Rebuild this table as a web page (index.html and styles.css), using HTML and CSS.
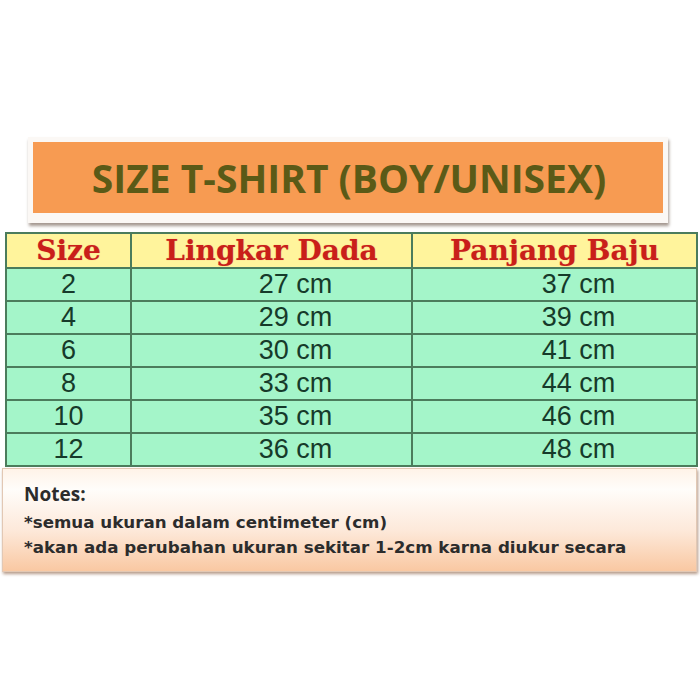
FILE: index.html
```html
<!DOCTYPE html>
<html>
<head>
<meta charset="utf-8">
<link rel="stylesheet" href="styles.css">
</head>
<body>
<div class="page">
  <div class="title-frame">
    <div class="title-box">SIZE T-SHIRT (BOY/UNISEX)</div>
  </div>
  <table class="sizes">
    <thead>
      <tr><th class="c1">Size</th><th class="c2">Lingkar Dada</th><th class="c3">Panjang Baju</th></tr>
    </thead>
    <tbody>
      <tr><td class="c1">2</td><td class="c2 v">27 cm</td><td class="c3 v">37 cm</td></tr>
      <tr><td class="c1">4</td><td class="c2 v">29 cm</td><td class="c3 v">39 cm</td></tr>
      <tr><td class="c1">6</td><td class="c2 v">30 cm</td><td class="c3 v">41 cm</td></tr>
      <tr><td class="c1">8</td><td class="c2 v">33 cm</td><td class="c3 v">44 cm</td></tr>
      <tr><td class="c1">10</td><td class="c2 v">35 cm</td><td class="c3 v">46 cm</td></tr>
      <tr><td class="c1">12</td><td class="c2 v">36 cm</td><td class="c3 v">48 cm</td></tr>
    </tbody>
  </table>
  <div class="notes">
    <div class="notes-title">Notes:</div>
    <div class="notes-line first">*semua ukuran dalam centimeter (cm)</div>
    <div class="notes-line">*akan ada perubahan ukuran sekitar 1-2cm karna diukur secara</div>
  </div>
</div>
</body>
</html>
```

FILE: styles.css
```css
html, body {
  margin: 0;
  padding: 0;
  background: #ffffff;
}
.page {
  width: 700px;
  height: 700px;
  padding-top: 137px;
  box-sizing: border-box;
  display: flex;
  flex-direction: column;
}
.title-frame {
  margin-left: 28px;
  width: 640px;
  height: 86px;
  box-sizing: border-box;
  padding: 5px 5px 10px 5px;
  background: #fbf8f5;
  box-shadow: 1px 3px 3px #a49890;
}
.title-box {
  height: 100%;
  background: #f79b52;
  display: flex;
  align-items: center;
  justify-content: center;
  font-family: "Open Sans", sans-serif;
  font-weight: 700;
  font-size: 39px;
  color: #5b5a17;
  padding-left: 2px;
  box-sizing: border-box;
}
.sizes {
  margin-top: 9px;
  margin-left: 5px;
  width: 691px;
  border-collapse: collapse;
  table-layout: fixed;
}
.sizes th, .sizes td {
  border: 2px solid #4b7c5c;
  padding: 0;
  text-align: center;
}
.c1 { width: 123px; }
.c2 { width: 279px; }
.c3 { width: 283px; }
.sizes th {
  height: 33px;
  background: #fff49c;
  font-family: "DejaVu Serif", serif;
  font-weight: 700;
  font-size: 28px;
  line-height: 33px;
  color: #c91f1a;
  text-shadow: 0 0 1px #e8a070;
}
.sizes td {
  height: 31px;
  background: #a4f5c9;
  font-family: "Liberation Sans", Arial, sans-serif;
  font-size: 27px;
  color: #163a2a;
  line-height: 31px;
}
.sizes td.v {
  padding-left: 48px;
}
.notes {
  margin-top: 1px;
  margin-left: 2px;
  width: 695px;
  height: 104px;
  box-sizing: border-box;
  padding: 13px 0 0 21px;
  background: linear-gradient(to bottom, #fff3e8 0%, #fffdfa 20%, #fde9da 60%, #f9c8a2 100%);
  border: 1px solid #e2c8b4;
  box-shadow: 1px 2px 3px #b59a88;
  font-family: "DejaVu Sans", Verdana, sans-serif;
  color: #2c2c2c;
}
.notes-title {
  font-family: "Open Sans", sans-serif;
  font-weight: 700;
  font-size: 19px;
  line-height: 24px;
}
.notes-line {
  font-weight: 700;
  font-size: 16.7px;
  line-height: 25px;
}
.notes-line.first {
  margin-top: 4px;
}
```
